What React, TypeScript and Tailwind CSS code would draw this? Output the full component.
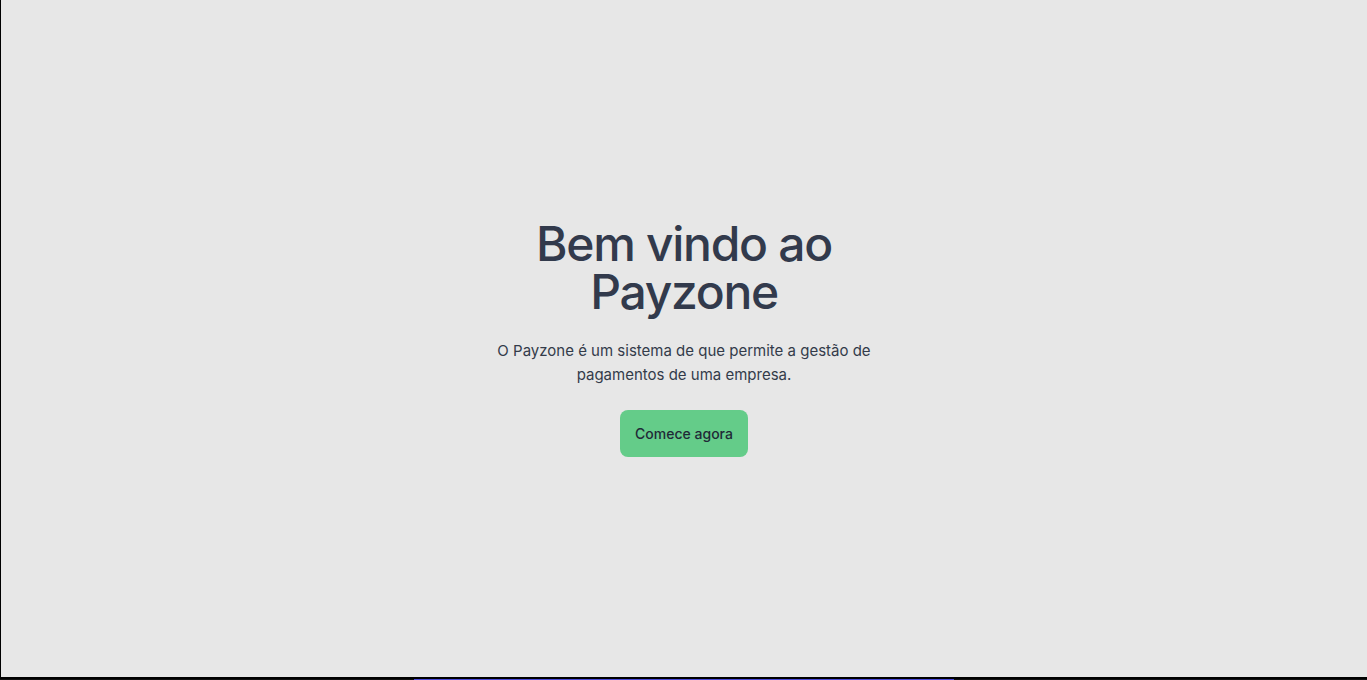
export default function App() {
  return (
    <div className="min-h-screen bg-white" style={{ fontFamily: "Inter, 'Noto Sans', sans-serif" }}>
      {/* HERO */}
      <section className="h-[679px] bg-[#e7e7e7] border-l border-b-2 border-black flex items-center justify-center">
        <div className="max-w-sm flex flex-col items-center text-center text-[#323a4c]">
          <h1 className="text-5xl leading-[48px] font-medium tracking-[-1.3px]">
            Bem vindo ao Payzone
          </h1>
          <p className="mt-[23px] text-[15px] leading-6 text-[#333b4a]">
            O Payzone é um sistema de que permite a gestão de pagamentos de uma empresa.
          </p>
          <button className="mt-[23px] w-[128px] h-[47px] rounded-lg bg-[#64cc89] text-sm font-medium text-[#1f2a37]">
            Comece agora
          </button>
        </div>
      </section>

      {/* NEXT SECTION */}
      <section className="h-[200px] bg-[#111] flex justify-center">
        <div className="w-[540px] h-[2px] bg-[#4b4bd8]" />
      </section>
    </div>
  );
}
